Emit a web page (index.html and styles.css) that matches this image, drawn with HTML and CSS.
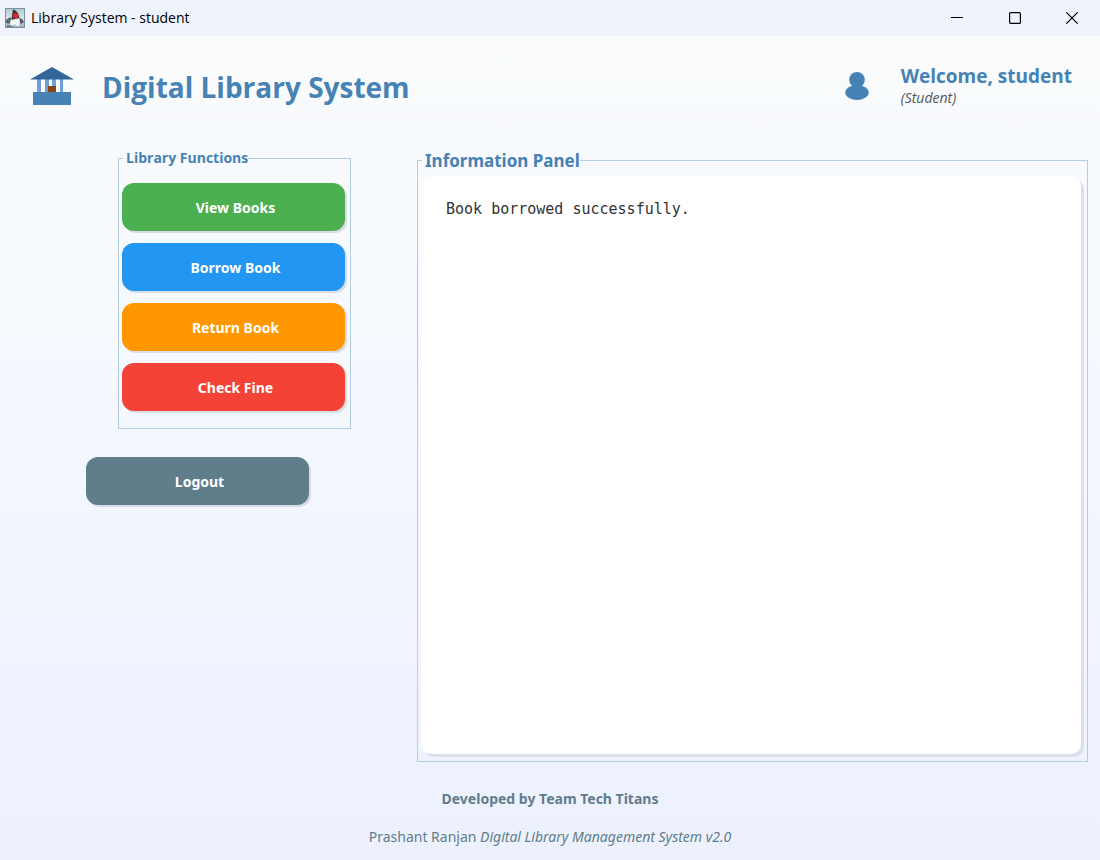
FILE: index.html
```html
<!DOCTYPE html>
<html lang="en">
<head>
<meta charset="utf-8">
<title>Library System - student</title>
<link rel="stylesheet" href="styles.css">
</head>
<body>
<div class="titlebar">
  <svg class="app-icon" width="20" height="20" viewBox="0 0 20 20" aria-hidden="true">
    <defs>
      <linearGradient id="tile" x1="0" y1="0" x2="0" y2="1">
        <stop offset="0" stop-color="#b4c6d3"/>
        <stop offset="0.5" stop-color="#dde5ea"/>
        <stop offset="1" stop-color="#9db0bd"/>
      </linearGradient>
    </defs>
    <rect x="0.5" y="0.5" width="19" height="19" fill="url(#tile)" stroke="#7792a5"/>
    <path d="M1 12 L5 9 L8 12 L6 16 L1 15Z" fill="#5c676e"/>
    <path d="M14 10 L17 11 L19 14 L16 16 L14 14Z" fill="#55595c"/>
    <path d="M6 11 L9 9 L14 9 L15 13 L14 18 L11 18 L10 16 L6 18 L5 15Z" fill="#f5f6f6"/>
    <path d="M8 1.5 L10 2 L13 5 L14.5 10 L10 11 L6.5 12 L7 7Z" fill="#343539"/>
    <path d="M2 17 L8 18 L7 19 L2 19Z" fill="#68737a"/>
    <circle cx="10.7" cy="7.6" r="2.7" fill="#e3262b"/>
  </svg>
  <span class="titlebar-text">Library System - student</span>
  <button class="window-button" type="button" aria-label="Minimize">
    <svg width="12" height="12" viewBox="0 0 12 12"><path d="M0 5.5H12" stroke="#000" fill="none"/></svg>
  </button>
  <button class="window-button" type="button" aria-label="Maximize">
    <svg width="12" height="12" viewBox="0 0 12 12"><rect x="0.6" y="0.6" width="10.8" height="10.8" rx="1" stroke="#000" stroke-width="1.2" fill="none"/></svg>
  </button>
  <button class="window-button" type="button" aria-label="Close">
    <svg width="12" height="12" viewBox="0 0 12 12"><path d="M0.3 0.3L11.7 11.7M11.7 0.3L0.3 11.7" stroke="#000" stroke-width="1.2" fill="none"/></svg>
  </button>
</div>
<div class="app">
  <header class="header">
    <svg class="logo" width="44" height="38" viewBox="0 0 44 38" aria-hidden="true">
      <g fill="#6fa0d0">
        <rect x="7" y="12" width="4" height="14"/>
        <rect x="15" y="12" width="4" height="14"/>
        <rect x="22" y="12" width="4" height="14"/>
        <rect x="30" y="12" width="3" height="14"/>
      </g>
      <path d="M0 12.5L22 0L44 12.5Z" fill="#336699"/>
      <rect x="3" y="25" width="38" height="13" fill="#4682b4"/>
      <rect x="18" y="19" width="8" height="6" fill="#8b4513"/>
    </svg>
    <h1 class="title">Digital Library System</h1>
    <svg class="avatar" width="24" height="28" viewBox="0 0 24 28" aria-hidden="true">
      <circle cx="12" cy="7.8" r="7.8" fill="#4682b4"/>
      <ellipse cx="12" cy="20.5" rx="11.7" ry="7.4" fill="#4682b4"/>
    </svg>
    <div class="user">
      <div class="welcome">Welcome, student</div>
      <div class="role">(Student)</div>
    </div>
  </header>
  <main class="main">
    <div class="side">
      <fieldset class="group functions">
        <legend class="functions-legend">Library Functions</legend>
        <button class="action view" type="button">View Books</button>
        <button class="action borrow" type="button">Borrow Book</button>
        <button class="action return" type="button">Return Book</button>
        <button class="action fine" type="button">Check Fine</button>
      </fieldset>
      <button class="action logout" type="button">Logout</button>
    </div>
    <fieldset class="group info">
      <legend class="info-legend" id="info-title">Information Panel</legend>
      <textarea class="output" aria-labelledby="info-title" readonly>Book borrowed successfully.</textarea>
    </fieldset>
  </main>
  <footer class="footer">
    <p class="team">Developed by Team Tech Titans</p>
    <p class="credit">Prashant Ranjan <em>Digital Library Management System v2.0</em></p>
  </footer>
</div>
</body>
</html>
```
FILE: styles.css
```css
* {
  box-sizing: border-box;
}

body {
  display: flex;
  flex-direction: column;
  min-height: 100vh;
  margin: 0;
  font-family: "Open Sans", "Noto Sans", sans-serif;
}

.titlebar {
  display: flex;
  align-items: center;
  height: 36px;
  padding-left: 5px;
  background: #eff3fb;
}

.app-icon {
  display: block;
}

.titlebar-text {
  flex: 1;
  padding: 0 0 2px 6px;
  color: #000;
  font-size: 14px;
}

.window-button {
  display: flex;
  align-items: center;
  justify-content: center;
  width: 58px;
  height: 34px;
  padding: 0;
  border: 0;
  background: transparent;
}

.window-button:last-child {
  width: 56px;
}

.app {
  display: flex;
  flex: 1;
  flex-direction: column;
  background: linear-gradient(#f9fbfc, #f5f8fe 40%, #edf1fe);
}

.header {
  display: flex;
  align-items: center;
  height: 100px;
  padding: 0 28px 0 30px;
}

.title {
  flex: 1;
  margin: 2px 0 0 28px;
  color: #4682b4;
  font-size: 28px;
  font-weight: 700;
}

.user {
  margin-left: 32px;
  color: #4682b4;
}

.welcome {
  font-size: 19px;
  font-weight: 700;
  line-height: 24px;
}

.role {
  color: #555;
  font-size: 14px;
  font-style: italic;
  line-height: 20px;
}

.main {
  display: flex;
  flex: 1;
  padding: 12px 12px 0 86px;
}

.side {
  width: 331px;
}

.group {
  min-width: 0;
  margin: 0;
  border: 1px solid #b5cde1;
}

.functions {
  display: flex;
  flex-direction: column;
  gap: 12px;
  width: 233px;
  margin-left: 32px;
  padding: 15px 3px 17px;
}

.functions-legend {
  margin-left: 1px;
  padding: 0 0 0 3px;
  color: #4682b4;
  font-size: 14px;
  font-weight: 700;
  line-height: 20px;
}

.action {
  display: block;
  width: 223px;
  height: 48px;
  padding: 0 0 0 4px;
  border: 0;
  border-radius: 12px;
  box-shadow: 2px 2px 0 #d9dce4;
  color: #fff;
  font-family: "Noto Sans", sans-serif;
  font-size: 14px;
  font-weight: 700;
}

.view {
  background: #4caf50;
}

.borrow {
  background: #2196f3;
}

.return {
  background: #ff9800;
}

.fine {
  background: #f44336;
}

.logout {
  margin-top: 28px;
  background: #607d8b;
}

.info {
  display: flex;
  flex: 1;
  padding: 4px 6px 7px 3px;
}

.info-legend {
  margin-left: 1px;
  padding: 2px 0 0 3px;
  color: #4682b4;
  font-family: "Noto Sans", sans-serif;
  font-size: 17px;
  font-weight: 700;
  line-height: 22px;
}

.output {
  flex: 1;
  min-width: 0;
  padding: 24px 25px;
  border: 0;
  border-radius: 10px;
  outline: 0;
  background: #fff;
  box-shadow: 3px 3px 0 #dbe0ea;
  color: #333;
  font-family: "DejaVu Sans Mono", monospace;
  font-size: 15px;
  line-height: 18px;
  resize: none;
}

.footer {
  padding: 27px 0 13px;
  color: #607d8b;
  font-family: "Noto Sans", sans-serif;
  font-size: 14px;
  line-height: 20px;
  text-align: center;
}

.team {
  margin: 0 0 18px;
  font-weight: 700;
}

.credit {
  margin: 0;
}
```
